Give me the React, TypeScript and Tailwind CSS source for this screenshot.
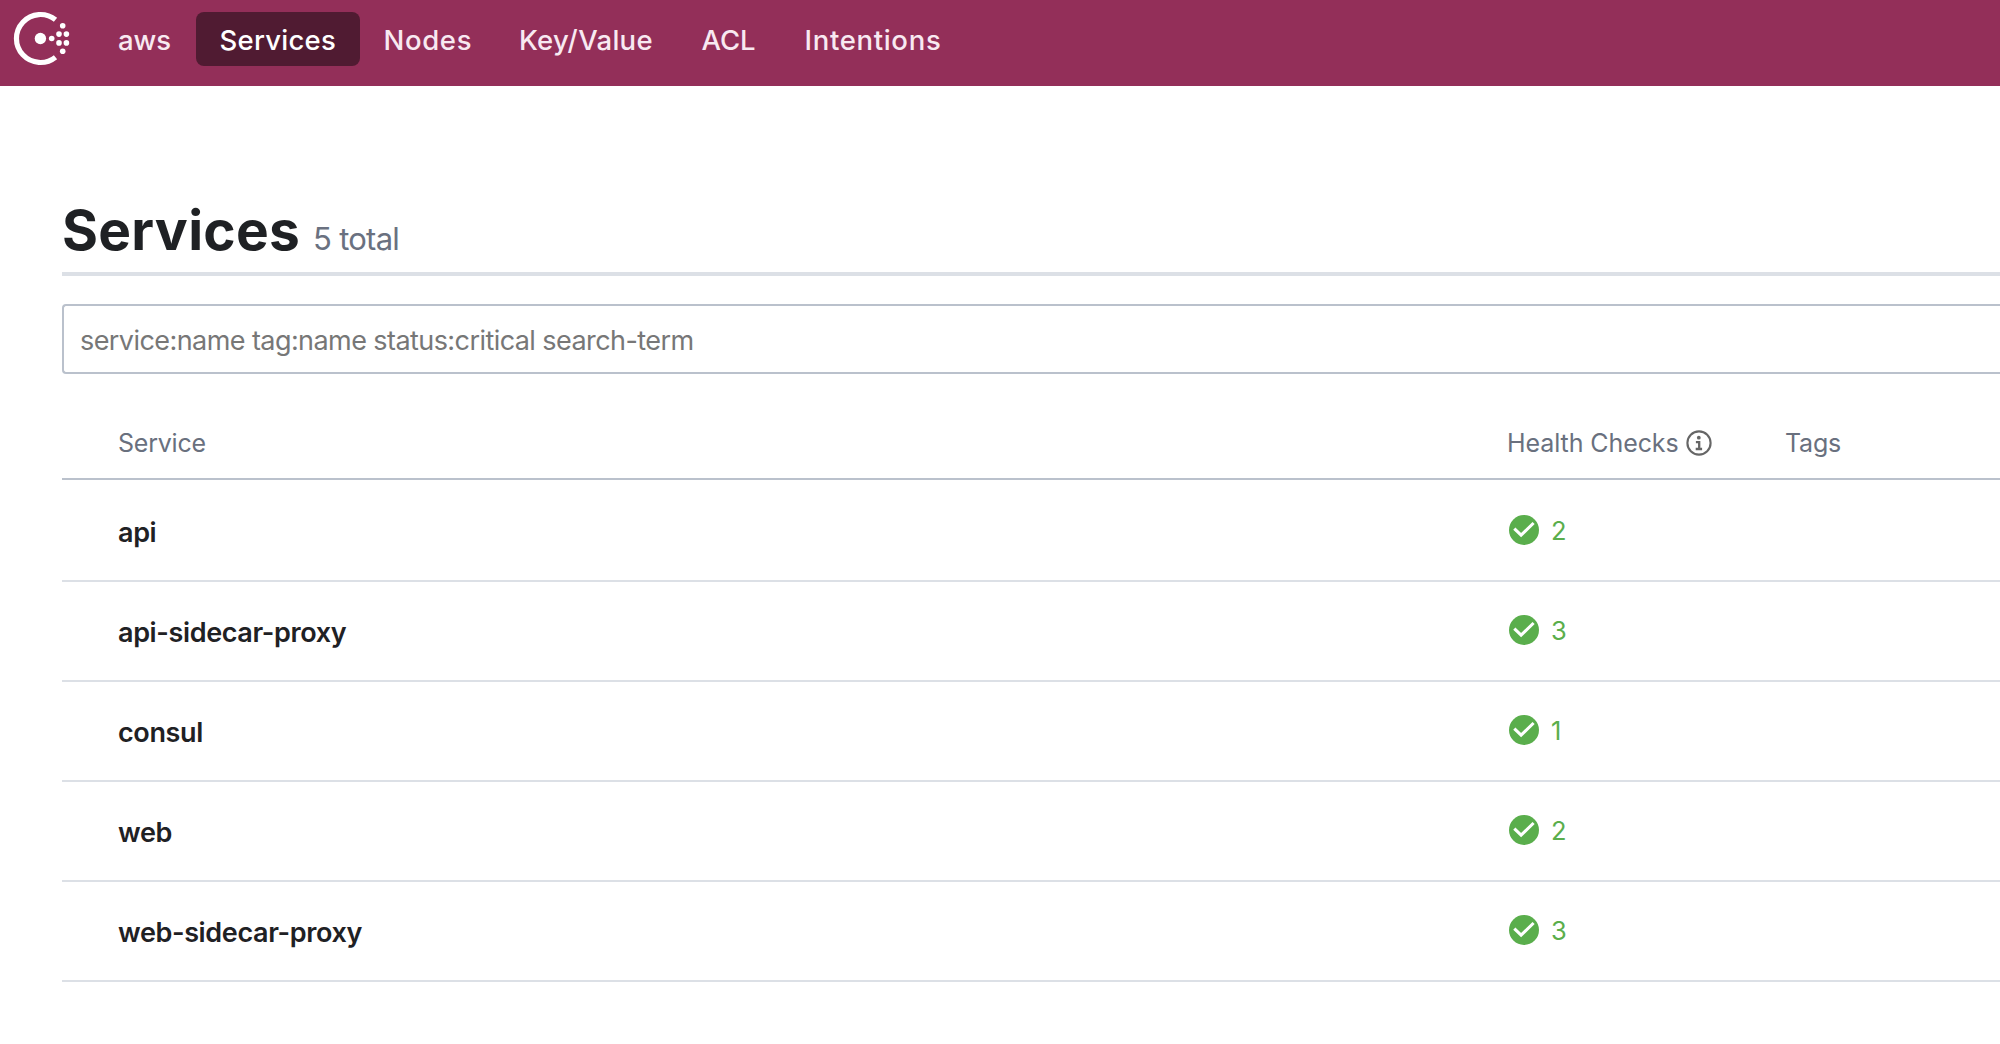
import React from "react";

const navItems = [
  { label: "aws", width: "w-[102px] pl-[24px]", tracking: "tracking-[-0.05px]", active: false },
  { label: "Services", width: "w-[164px] pl-[23.5px]", tracking: "tracking-[0.25px]", active: true },
  { label: "Nodes", width: "w-[135px] pl-[23.5px]", tracking: "tracking-[0.65px]", active: false },
  { label: "Key/Value", width: "w-[183px] pl-[24px]", tracking: "tracking-[0.3px]", active: false },
  { label: "ACL", width: "w-[101px] pl-[23.5px]", tracking: "tracking-[-0.1px]", active: false },
  { label: "Intentions", width: "w-[184px] pl-[25.5px]", tracking: "tracking-[0.68px]", active: false },
];

const services = [
  { name: "api", passing: 2 },
  { name: "api-sidecar-proxy", passing: 3 },
  { name: "consul", passing: 1 },
  { name: "web", passing: 2 },
  { name: "web-sidecar-proxy", passing: 3 },
];

function ConsulLogo() {
  return (
    <svg className="ml-[13px] mt-[11px] h-[56px] w-[58px] shrink-0" viewBox="0 0 58 56" fill="none">
      <path d="M42.5 8.8A24 24 0 1 0 42.5 46.2" stroke="#fff" strokeWidth="5.2" />
      <g fill="#fff">
        <circle cx="27.4" cy="27.5" r="5.7" />
        <circle cx="38.7" cy="27.5" r="2.8" />
        <circle cx="46" cy="23.1" r="2.8" />
        <circle cx="53.4" cy="23.1" r="2.8" />
        <circle cx="46" cy="31.9" r="2.8" />
        <circle cx="53.4" cy="31.9" r="2.8" />
        <circle cx="49.7" cy="14.7" r="2.8" />
        <circle cx="49.7" cy="40.3" r="2.8" />
      </g>
    </svg>
  );
}

function PassingIcon() {
  return (
    <svg className="h-[30px] w-[30px]" viewBox="0 0 30 30" fill="none">
      <circle cx="15" cy="15" r="15" fill="#5aae4c" />
      <path d="M5.3 13.7L12.1 20.2L24.6 8" stroke="#fff" strokeWidth="3.1" />
    </svg>
  );
}

function InfoIcon() {
  return (
    <svg className="h-[26px] w-[26px]" viewBox="0 0 26 26" fill="none">
      <circle cx="13" cy="13" r="11.6" stroke="#666" strokeWidth="2.1" />
      <circle cx="12.8" cy="7.7" r="1.9" fill="#666" />
      <path d="M9.9 12.1H13.2V19M9.7 19H16.1" stroke="#666" strokeWidth="2.3" />
    </svg>
  );
}

export default function App() {
  return (
    <div className="min-h-[1044px] w-full overflow-hidden bg-white font-[Inter,sans-serif]">
      <header className="flex h-[86px] bg-[#932f59]">
        <ConsulLogo />
        <nav className="ml-[23px] mt-[12px] flex h-[54px] text-[27.5px] font-medium leading-[56px]">
          {navItems.map((item) => (
            <a
              key={item.label}
              className={`block h-[54px] whitespace-nowrap rounded-[8px] ${item.width} ${item.tracking} ${
                item.active ? "bg-[#501b32] text-white" : "text-[#f8e9f1]"
              }`}
            >
              {item.label}
            </a>
          ))}
        </nav>
      </header>

      <main className="ml-[62px]">
        <div className="flex h-[190px] items-baseline border-b-4 border-[#dce0e6] pt-[108px]">
          <h1 className="text-[55px] font-bold leading-[72px] tracking-[0.28px] text-[#1f2124]">Services</h1>
          <span className="ml-[13px] text-[31px] tracking-[-0.75px] text-[#6a7180]">5 total</span>
        </div>

        <div className="mt-[28px] flex h-[70px] items-center rounded-l-[4px] border-2 border-r-0 border-[#bac1cc] pl-[16px] pt-[5px]">
          <span className="text-[27px] tracking-[-0.57px] text-[#777]">
            service:name tag:name status:critical search-term
          </span>
        </div>

        <div className="mt-[30px] flex h-[76px] items-center border-b-2 border-[#bac1cc] pt-[5px] text-[25px] text-[#69707e]">
          <div className="w-[1445px] pl-[56px] tracking-[-0.22px]">Service</div>
          <div className="flex w-[278px] items-center">
            <span className="tracking-[-0.08px]">Health Checks</span>
            <span className="mb-[2px] ml-[7px]">
              <InfoIcon />
            </span>
          </div>
          <div className="tracking-[-0.23px]">Tags</div>
        </div>

        <div className="pt-[2px]">
          {services.map((service) => (
            <div key={service.name} className="flex h-[100px] items-center border-b-2 border-[#dce0e6]">
              <div className="w-[1447px] pl-[56px] pt-[4px] text-[27px] font-semibold tracking-[-0.37px] text-[#1f2124]">
                {service.name}
              </div>
              <div className="mb-[2px] flex items-center text-[#5aae4c]">
                <PassingIcon />
                <span className="ml-[12px] pt-[1px] text-[25.5px] leading-[28px]">{service.passing}</span>
              </div>
            </div>
          ))}
        </div>
      </main>
    </div>
  );
}
